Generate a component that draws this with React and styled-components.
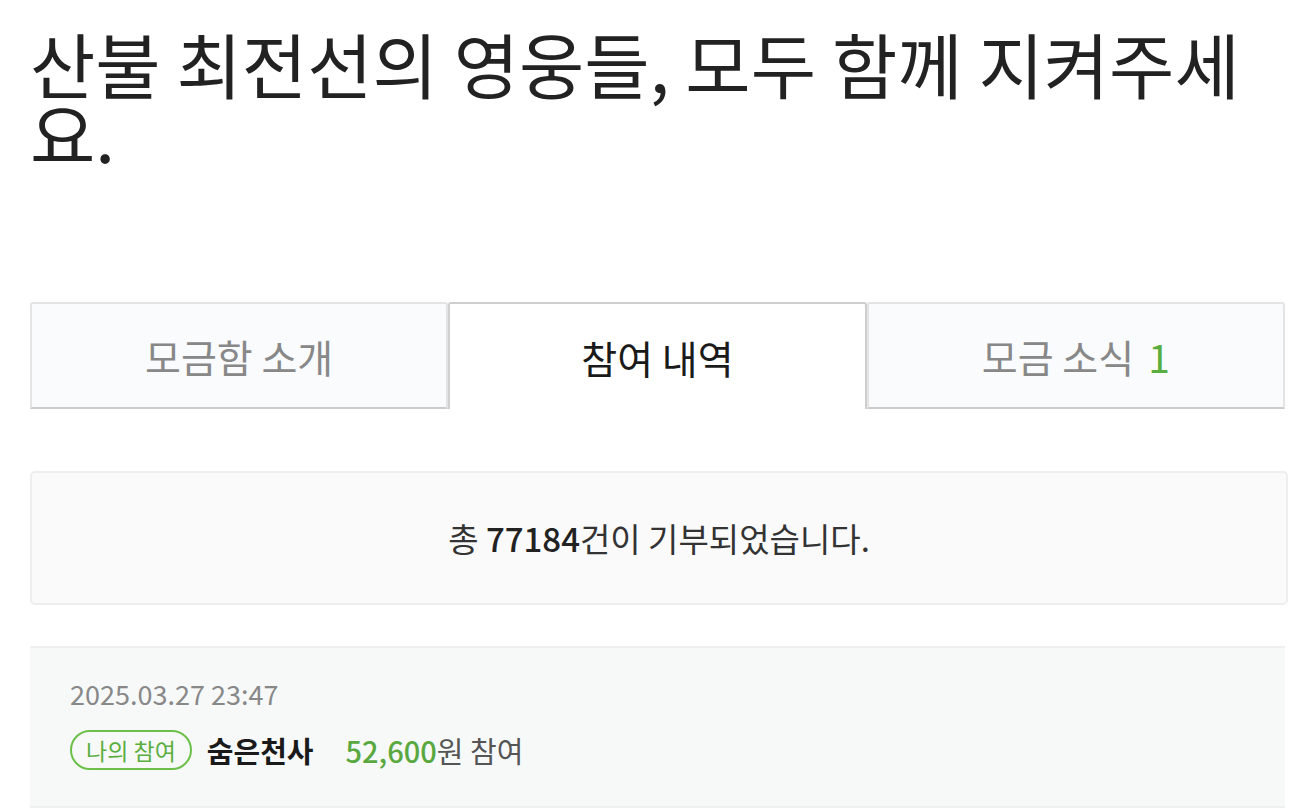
import React from "react";
import styled, { createGlobalStyle } from "styled-components";

const Global = createGlobalStyle`
  html, body { margin: 0; padding: 0; background: #fff; }
  body { font-family: "Noto Sans CJK KR", "Noto Sans", sans-serif; color: #222; }
`;

const Page = styled.div`
  padding: 27px 25px 0 30px;
  display: flex;
  flex-direction: column;
`;

const Title = styled.h1`
  margin: 0;
  font-size: 71px;
  font-weight: 400;
  line-height: 70px;
  color: #222;
`;

const Tabs = styled.div`
  margin: 135px 3px 0 0;
  display: grid;
  grid-template-columns: repeat(3, 1fr);
`;

const Tab = styled.div`
  height: 107px;
  box-sizing: border-box;
  display: flex;
  align-items: center;
  justify-content: center;
  font-size: 39px;
  border-radius: 3px 3px 0 0;
  ${(p) =>
    p.$active
      ? `
    background: #fff;
    color: #1a1a1a;
    border: 2px solid #cfcfcf;
    border-bottom: none;
  `
      : `
    background: #fafbfd;
    color: #888;
    border: 2px solid #e4e4e4;
    border-bottom: 2px solid #cccccc;
  `}
`;

const Count = styled.span`
  color: #5aae3e;
  margin-left: 14px;
`;

const Summary = styled.div`
  margin-top: 62px;
  height: 134px;
  box-sizing: border-box;
  border: 2px solid #eeeeee;
  border-radius: 5px;
  background: #fafafa;
  display: flex;
  align-items: center;
  justify-content: center;
  font-size: 33px;
  color: #333;
`;

const Strong = styled.b`
  font-weight: 500;
  color: #222;
`;

const Item = styled.div`
  margin: 41px 3px 0 0;
  background: #f7f9f9;
  border-top: 2px solid #f0f0f0;
  border-bottom: 2px solid #f0f0f0;
  padding: 30px 40px 35px;
  display: flex;
  flex-direction: column;
  gap: 19px;
`;

const Date = styled.div`
  font-size: 27px;
  color: #888;
  line-height: 32px;
`;

const Row = styled.div`
  display: flex;
  align-items: center;
`;

const Badge = styled.span`
  display: inline-flex;
  align-items: center;
  justify-content: center;
  height: 40px;
  box-sizing: border-box;
  padding: 0 14px;
  border: 2px solid #6cc04a;
  border-radius: 20px;
  color: #5aae3e;
  font-size: 23px;
  margin-right: 15px;
`;

const Name = styled.span`
  font-size: 29px;
  font-weight: 700;
  color: #1a1a1a;
  margin-right: 32px;
`;

const Amount = styled.span`
  font-size: 29px;
  color: #555;
`;

const Money = styled.span`
  color: #5aa840;
  font-weight: 500;
`;

export default function App() {
  return (
    <>
      <Global />
      <Page>
        <Title>산불 최전선의 영웅들, 모두 함께 지켜주세요.</Title>
        <Tabs>
          <Tab>모금함 소개</Tab>
          <Tab $active>참여 내역</Tab>
          <Tab>
            모금 소식<Count>1</Count>
          </Tab>
        </Tabs>
        <Summary>
          총&nbsp;<Strong>77184</Strong>건이 기부되었습니다.
        </Summary>
        <Item>
          <Date>2025.03.27 23:47</Date>
          <Row>
            <Badge>나의 참여</Badge>
            <Name>숨은천사</Name>
            <Amount>
              <Money>52,600</Money>원 참여
            </Amount>
          </Row>
        </Item>
      </Page>
    </>
  );
}
